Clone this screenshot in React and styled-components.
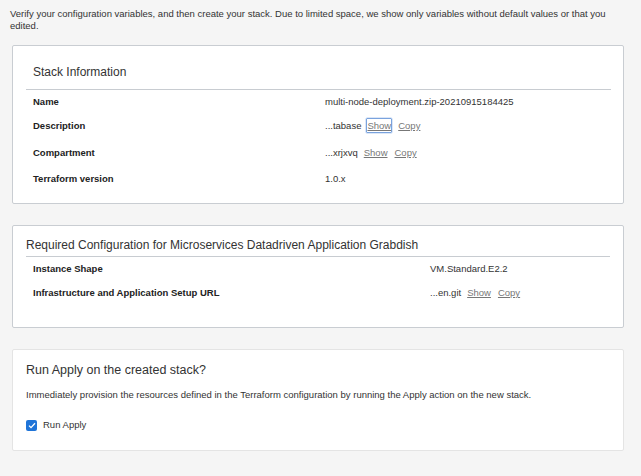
import React from "react";
import styled, { createGlobalStyle, css } from "styled-components";

const GlobalStyle = createGlobalStyle`
  html, body {
    margin: 0;
    padding: 0;
    background: #f5f5f5;
  }
  body {
    font-family: "Liberation Sans", Arial, Helvetica, sans-serif;
    color: #333;
  }
`;

const Page = styled.div`
  padding: 8px 17px 24px 12px;
  display: flex;
  flex-direction: column;
`;

const Intro = styled.p`
  margin: 0 0 13px -2px;
  font-size: 9.5px;
  line-height: 12px;
  color: #333;
`;

const Panel = styled.section`
  background: #fff;
  border: 1px solid ${props => (props.$light ? "#e4e4e4" : "#c9cdd2")};
  border-radius: 2px;
  padding: ${props => props.$pad || "11px 12px 20px 13px"};
  margin-bottom: ${props => props.$gap || "21px"};
`;

const PanelTitle = styled.h2`
  margin: 0;
  font-size: ${props => props.$size || 12}px;
  line-height: 16px;
  font-weight: normal;
  color: #333;
  padding-left: ${props => props.$inset || 0}px;
  margin-bottom: ${props => props.$below || 3}px;
`;

const Divider = styled.div`
  height: 1px;
  background: #c8ccd1;
`;

const Rows = styled.div`
  display: grid;
  grid-template-columns: ${props => props.$label}px 1fr;
  padding-left: 7px;
`;

const Label = styled.div`
  font-size: 9.5px;
  line-height: 12px;
  font-weight: bold;
  color: #222;
  padding-top: 6px;
  height: ${props => props.$h || 24}px;
  box-sizing: border-box;
`;

const Value = styled.div`
  font-size: 9.5px;
  line-height: 12px;
  color: #333;
  padding-top: 6px;
  height: ${props => props.$h || 24}px;
  box-sizing: border-box;
  display: flex;
  align-items: flex-start;
  gap: 5px;
  white-space: nowrap;
`;

const LinkButton = styled.button`
  font: inherit;
  font-size: 9.5px;
  line-height: 13px;
  margin-top: -2px;
  padding: 0;
  background: none;
  border: 1px solid transparent;
  border-radius: 1px;
  color: #777;
  text-decoration: underline;
  cursor: pointer;
  ${props =>
    props.$focused &&
    css`
      border-color: #7aa3de;
      box-shadow: 0 0 0 0.5px #b9cff0;
    `};
`;

const Description = styled.p`
  margin: 0 0 18px;
  font-size: 9.5px;
  line-height: 12px;
  color: #333;
`;

const CheckRow = styled.label`
  display: flex;
  align-items: center;
  gap: 6px;
  font-size: 9.5px;
  line-height: 12px;
  color: #333;
`;

const Box = styled.span`
  width: 11px;
  height: 11px;
  border-radius: 2px;
  background: #1f74d8;
  display: inline-flex;
  align-items: center;
  justify-content: center;
`;

const stackRows = [
  { label: "Name", value: "multi-node-deployment.zip-20210915184425" },
  { label: "Description", value: "...tabase", links: true, focused: true, h: 27 },
  { label: "Compartment", value: "...xrjxvq", links: true, h: 26 },
  { label: "Terraform version", value: "1.0.x" }
];

const configRows = [
  { label: "Instance Shape", value: "VM.Standard.E2.2" },
  { label: "Infrastructure and Application Setup URL", value: "...en.git", links: true, h: 26 }
];

const RowList = ({ rows, labelWidth }) => (
  <Rows $label={labelWidth}>
    {rows.map(row => (
      <React.Fragment key={row.label}>
        <Label $h={row.h}>{row.label}</Label>
        <Value $h={row.h}>
          <span>{row.value}</span>
          {row.links && (
            <>
              <LinkButton $focused={row.focused}>Show</LinkButton>
              <LinkButton>Copy</LinkButton>
            </>
          )}
        </Value>
      </React.Fragment>
    ))}
  </Rows>
);

export default function App() {
  return (
    <>
      <GlobalStyle />
      <Page>
        <Intro>
          Verify your configuration variables, and then create your stack. Due
          to limited space, we show only variables without default values or
          that you edited.
        </Intro>

        <Panel $pad="18px 12px 12px 13px">
          <PanelTitle $inset={7} $below={9}>
            Stack Information
          </PanelTitle>
          <Divider />
          <RowList rows={stackRows} labelWidth={292} />
        </Panel>

        <Panel $pad="11px 13px 20px 13px">
          <PanelTitle $below={3}>
            Required Configuration for Microservices Datadriven Application
            Grabdish
          </PanelTitle>
          <Divider />
          <RowList rows={configRows} labelWidth={397} />
        </Panel>

        <Panel $light $pad="12px 13px 19px 13px">
          <PanelTitle $size={12.5} $below={11}>
            Run Apply on the created stack?
          </PanelTitle>
          <Description>
            Immediately provision the resources defined in the Terraform
            configuration by running the Apply action on the new stack.
          </Description>
          <CheckRow>
            <Box>
              <svg width="8" height="7" viewBox="0 0 8 7">
                <path
                  d="M1 3.6 L3 5.6 L7 1.2"
                  fill="none"
                  stroke="#fff"
                  strokeWidth="1.3"
                />
              </svg>
            </Box>
            Run Apply
          </CheckRow>
        </Panel>
      </Page>
    </>
  );
}
